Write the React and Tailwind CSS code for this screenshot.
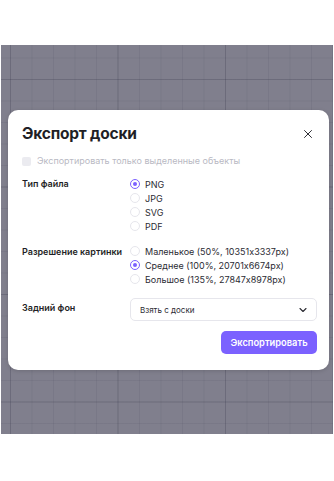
import React, { useState } from 'react';
import { X, ChevronDown } from 'lucide-react';

const Radio = ({ checked, label, onClick }) => (
    <button onClick={onClick} className="flex items-center gap-[5px] h-[14px] text-left">
        <span className={`w-[10px] h-[10px] rounded-full flex items-center justify-center border ${checked ? 'border-[#7b61ff] bg-white' : 'border-[#e6e6ec] bg-white'}`}>
            {checked && <span className="w-[4px] h-[4px] rounded-full bg-[#7b61ff]" />}
        </span>
        <span className="text-[9px] text-[#2b2b33] leading-none">{label}</span>
    </button>
);

export default function App() {
    const [format, setFormat] = useState('PNG');
    const [size, setSize] = useState('medium');

    const sizes = [
        { id: 'small', label: 'Маленькое (50%, 10351x3337px)' },
        { id: 'medium', label: 'Среднее (100%, 20701x6674px)' },
        { id: 'large', label: 'Большое (135%, 27847x8978px)' },
    ];

    return (
        <div className="w-[334px] h-[481px] bg-white font-['Inter',sans-serif] pt-[45px] pl-[1px]">
            {/* Board backdrop */}
            <div className="w-[332px] h-[389px] bg-[#807f8d] bg-[linear-gradient(to_right,rgba(60,60,80,0.1)_1px,transparent_1px),linear-gradient(to_bottom,rgba(60,60,80,0.1)_1px,transparent_1px),linear-gradient(to_right,rgba(60,60,80,0.22)_1px,transparent_1px),linear-gradient(to_bottom,rgba(60,60,80,0.22)_1px,transparent_1px)] bg-[size:21.5px_21.5px,21.5px_21.5px,107.5px_107.5px,107.5px_107.5px] bg-[position:9px_34px,9px_34px,9px_34px,9px_34px] pt-[65px] pl-[7px]">
                {/* Modal */}
                <div className="w-[321px] bg-white rounded-[10px] shadow-[0_1px_4px_rgba(0,0,0,0.15)] pl-[14px] pr-[12px] pt-[14px] pb-[16px]">
                    <div className="flex items-center justify-between">
                        <h1 className="text-[15.5px] font-bold text-[#1f1f26] leading-[20px] tracking-[-0.2px]">Экспорт доски</h1>
                        <X className="w-[14px] h-[14px] text-[#1f1f26] mr-[2px]" strokeWidth={1.6} />
                    </div>

                    <div className="flex items-center gap-[6px] mt-[11px]">
                        <span className="w-[9px] h-[9px] rounded-[2px] bg-[#ebebf0]" />
                        <span className="text-[9px] text-[#b9b9c3] leading-[12px]">Экспортировать только выделенные объекты</span>
                    </div>

                    <div className="flex mt-[10px]">
                        <div className="w-[108px] text-[9px] font-semibold text-[#1f1f26] leading-[14px]">Тип файла</div>
                        <div className="flex flex-col">
                            {['PNG', 'JPG', 'SVG', 'PDF'].map(f => (
                                <Radio key={f} label={f} checked={format === f} onClick={() => setFormat(f)} />
                            ))}
                        </div>
                    </div>

                    <div className="flex mt-[11px]">
                        <div className="w-[108px] text-[9px] font-semibold text-[#1f1f26] leading-[14px] pt-[1px]">Разрешение картинки</div>
                        <div className="flex flex-col">
                            {sizes.map(s => (
                                <Radio key={s.id} label={s.label} checked={size === s.id} onClick={() => setSize(s.id)} />
                            ))}
                        </div>
                    </div>

                    <div className="flex mt-[12px]">
                        <div className="w-[108px] text-[9px] font-semibold text-[#1f1f26] leading-[14px] pt-[3px]">Задний фон</div>
                        <div className="flex-1 h-[23px] border border-[#e6e6ec] rounded-[5px] flex items-center justify-between pl-[9px] pr-[7px]">
                            <span className="text-[8px] text-[#2b2b33]">Взять с доски</span>
                            <ChevronDown className="w-[12px] h-[12px] text-[#2b2b33]" strokeWidth={2.2} />
                        </div>
                    </div>

                    <div className="flex justify-end mt-[10px]">
                        <button className="w-[96px] h-[23px] rounded-[5px] bg-[#7b61ff] text-white text-[9.3px] font-semibold">Экспортировать</button>
                    </div>
                </div>
            </div>
        </div>
    );
}
